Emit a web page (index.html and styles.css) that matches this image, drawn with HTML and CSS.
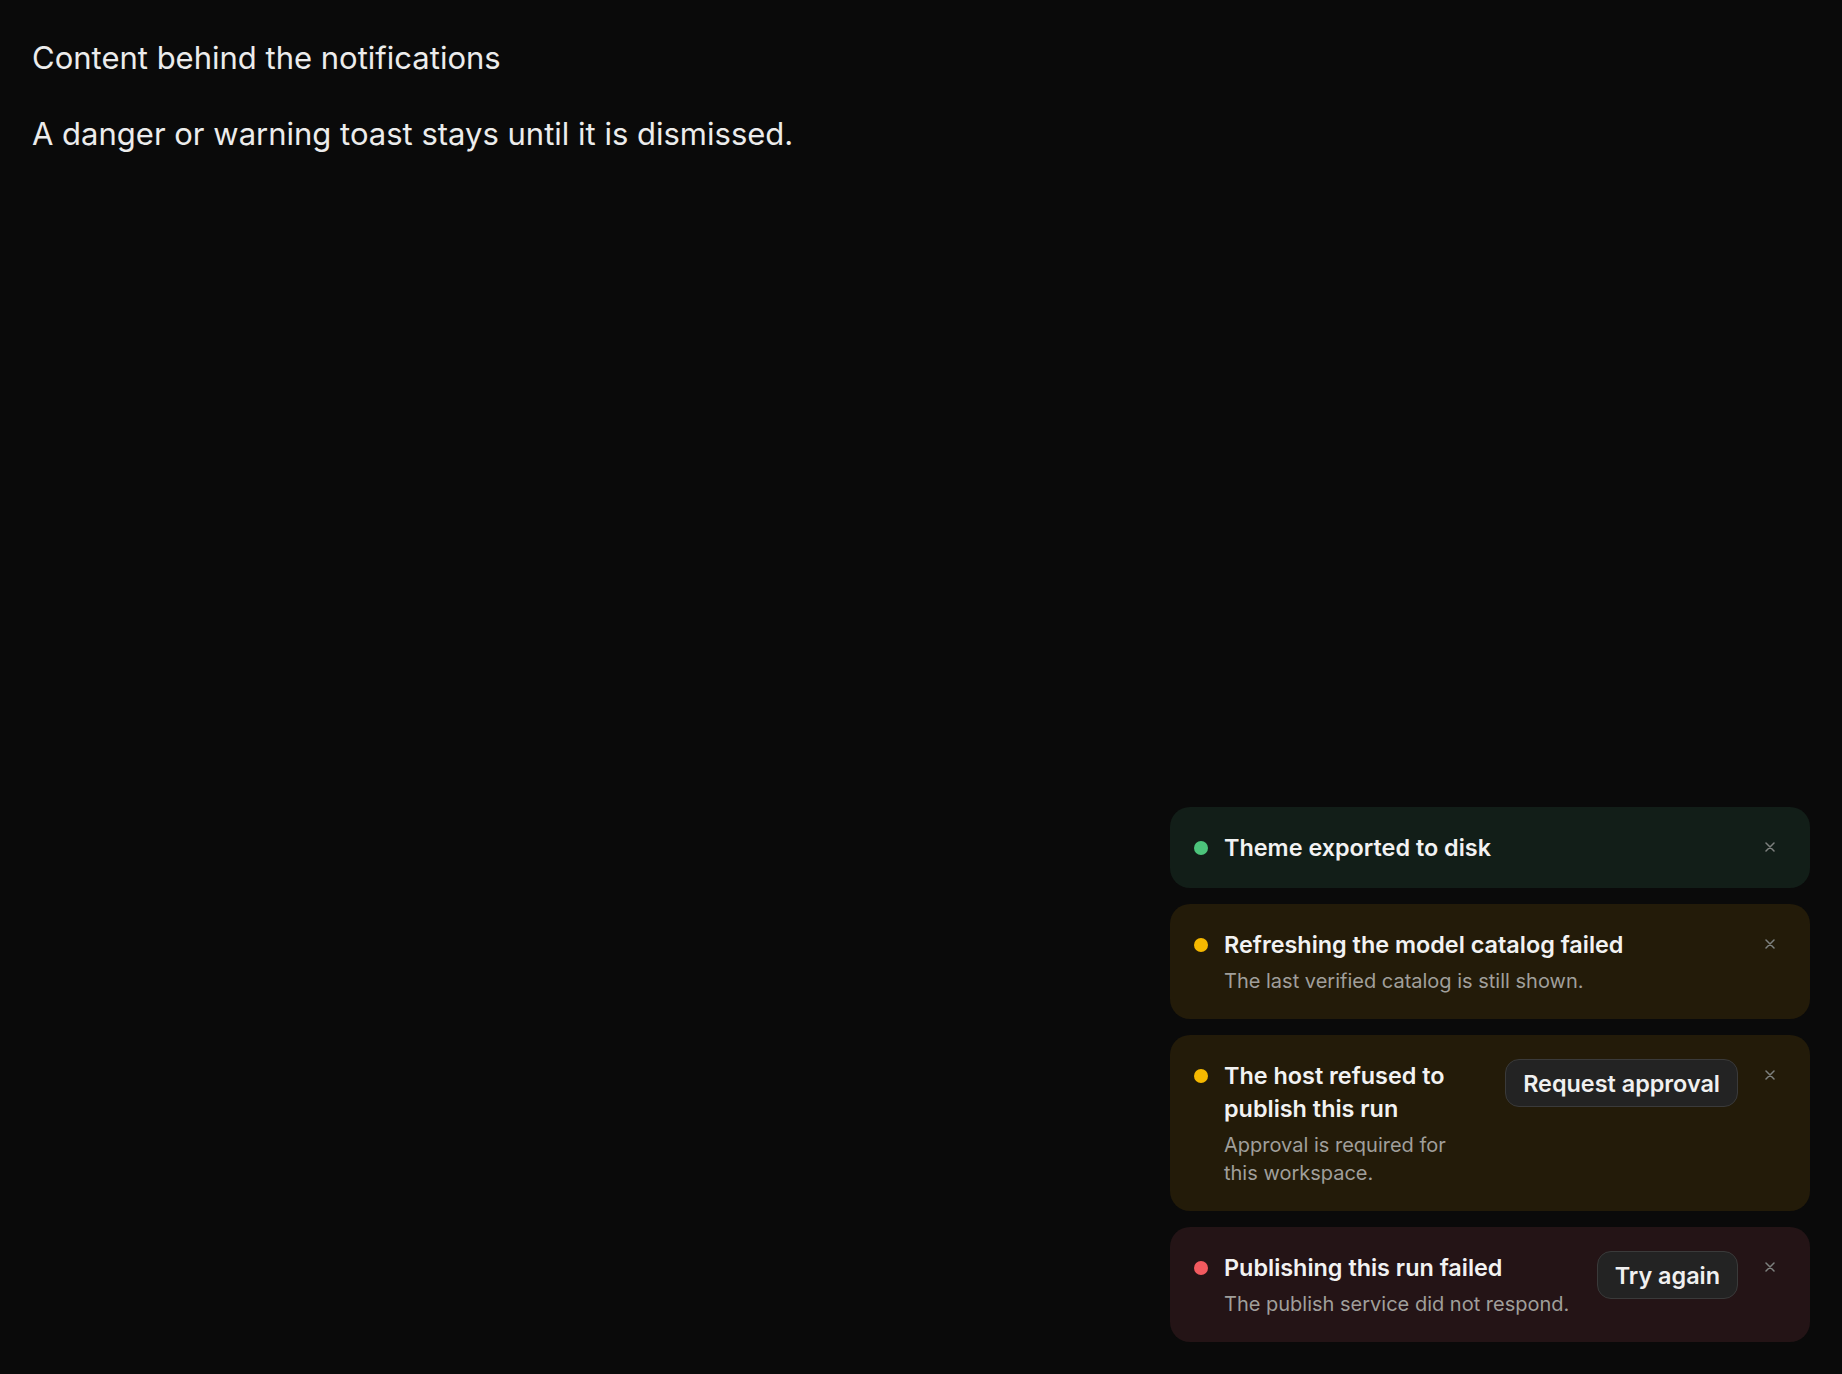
FILE: index.html
```html
<!DOCTYPE html>
<html lang="en">
<head>
<meta charset="utf-8">
<title>Toasts</title>
<link rel="stylesheet" href="styles.css">
</head>
<body>
<main class="page">
  <p class="lead">Content behind the notifications</p>
  <p class="lead">A danger or warning toast stays until it is dismissed.</p>
</main>

<section class="toaster" aria-label="Notifications">
  <div class="toast toast-success" role="status">
    <span class="dot"></span>
    <div class="toast-body">
      <div class="toast-title">Theme exported to disk</div>
    </div>
    <button class="toast-close" aria-label="Dismiss">
      <svg viewBox="0 0 10 10" width="10" height="10"><path d="M1 1L9 9M9 1L1 9"/></svg>
    </button>
  </div>

  <div class="toast toast-warning" role="alert">
    <span class="dot"></span>
    <div class="toast-body">
      <div class="toast-title">Refreshing the model catalog failed</div>
      <div class="toast-desc">The last verified catalog is still shown.</div>
    </div>
    <button class="toast-close" aria-label="Dismiss">
      <svg viewBox="0 0 10 10" width="10" height="10"><path d="M1 1L9 9M9 1L1 9"/></svg>
    </button>
  </div>

  <div class="toast toast-warning" role="alert">
    <span class="dot"></span>
    <div class="toast-body">
      <div class="toast-title">The host refused to publish this run</div>
      <div class="toast-desc">Approval is required for this workspace.</div>
    </div>
    <button class="toast-action">Request approval</button>
    <button class="toast-close" aria-label="Dismiss">
      <svg viewBox="0 0 10 10" width="10" height="10"><path d="M1 1L9 9M9 1L1 9"/></svg>
    </button>
  </div>

  <div class="toast toast-danger" role="alert">
    <span class="dot"></span>
    <div class="toast-body">
      <div class="toast-title">Publishing this run failed</div>
      <div class="toast-desc">The publish service did not respond.</div>
    </div>
    <button class="toast-action">Try again</button>
    <button class="toast-close" aria-label="Dismiss">
      <svg viewBox="0 0 10 10" width="10" height="10"><path d="M1 1L9 9M9 1L1 9"/></svg>
    </button>
  </div>
</section>
</body>
</html>
```

FILE: styles.css
```css
* {
  box-sizing: border-box;
}

html, body {
  margin: 0;
  height: 100%;
}

body {
  background: #0a0a0a;
  color: #ededed;
  font-family: Inter, "Noto Sans", "Liberation Sans", sans-serif;
}

.page {
  padding: 40px 32px;
}

.lead {
  margin: 0 0 40px;
  font-size: 31px;
  line-height: 36px;
  color: #ececec;
}

/* toast stack pinned to the bottom-right corner */
.toaster {
  position: fixed;
  right: 32px;
  bottom: 32px;
  width: 640px;
  display: flex;
  flex-direction: column;
  gap: 16px;
}

.toast {
  display: flex;
  align-items: flex-start;
  gap: 16px;
  padding: 24px;
  border-radius: 20px;
}

.toast-success { background: #121e18; }
.toast-warning { background: #231b09; }
.toast-danger  { background: #241416; }

.dot {
  flex-shrink: 0;
  width: 14px;
  height: 14px;
  margin-top: 9.5px;
  border-radius: 50%;
}

.toast-success .dot { background: #4cc47b; }
.toast-warning .dot { background: #f5b800; }
.toast-danger .dot  { background: #f25a5f; }

.toast-body {
  flex: 1;
  min-width: 0;
  display: flex;
  flex-direction: column;
  gap: 6px;
}

.toast-title {
  font-size: 23.4px;
  font-weight: 600;
  line-height: 33px;
  color: #f2f2f2;
}

.toast-desc {
  font-size: 20px;
  line-height: 28px;
  color: #a09f9b;
}

.toast-action {
  flex-shrink: 0;
  height: 48px;
  margin-left: 10px;
  padding: 0 17px;
  border: 1.5px solid #3a3a3a;
  border-radius: 14px;
  background: #232323;
  color: #f0f0f0;
  font-family: inherit;
  font-size: 23.4px;
  font-weight: 600;
  cursor: pointer;
}

.toast-close {
  flex-shrink: 0;
  width: 32px;
  height: 32px;
  padding: 0;
  border: 0;
  background: transparent;
  display: flex;
  align-items: center;
  justify-content: center;
  cursor: pointer;
}

.toast-close svg path {
  fill: none;
  stroke: #7d807e;
  stroke-width: 1.5;
  stroke-linecap: round;
}
```
